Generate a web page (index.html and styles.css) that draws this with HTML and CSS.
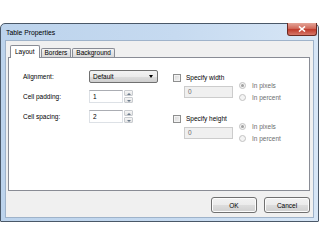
FILE: index.html
```html
<!DOCTYPE html>
<html lang="en">
<head>
    <meta charset="UTF-8">
    <title>Table Properties</title>
    <link rel="stylesheet" href="styles.css">
</head>
<body>
    <div class="window">
        <div class="titlebar">
            <span class="title">Table Properties</span>
            <span class="close">
                <svg width="8" height="6" viewBox="0 0 8 6"><path d="M1 0.5 L7 5.5 M7 0.5 L1 5.5" stroke="#fff" stroke-width="1.6"/></svg>
            </span>
        </div>
        <div class="client">
            <div class="tabs">
                <div class="tab active">Layout</div>
                <div class="tab">Borders</div>
                <div class="tab">Background</div>
            </div>
            <div class="panel">
                <div class="col-left">
                    <div class="field">
                        <span class="label">Alignment:</span>
                        <div class="select"><span>Default</span><span class="caret"></span></div>
                    </div>
                    <div class="field">
                        <span class="label">Cell padding:</span>
                        <div class="textbox">1</div>
                        <div class="spin"><span class="up"></span><span class="down"></span></div>
                    </div>
                    <div class="field">
                        <span class="label">Cell spacing:</span>
                        <div class="textbox">2</div>
                        <div class="spin"><span class="up"></span><span class="down"></span></div>
                    </div>
                </div>
                <div class="col-right">
                    <div class="size-group">
                        <div class="check-row"><span class="checkbox"></span><span>Specify width</span></div>
                        <div class="size-row">
                            <div class="textbox disabled">0</div>
                            <div class="radios">
                                <div class="radio-row"><span class="radio checked"></span><span>In pixels</span></div>
                                <div class="radio-row"><span class="radio"></span><span>In percent</span></div>
                            </div>
                        </div>
                    </div>
                    <div class="size-group">
                        <div class="check-row"><span class="checkbox"></span><span>Specify height</span></div>
                        <div class="size-row">
                            <div class="textbox disabled">0</div>
                            <div class="radios">
                                <div class="radio-row"><span class="radio checked"></span><span>In pixels</span></div>
                                <div class="radio-row"><span class="radio"></span><span>In percent</span></div>
                            </div>
                        </div>
                    </div>
                </div>
            </div>
            <div class="footer">
                <button class="btn">OK</button>
                <button class="btn">Cancel</button>
            </div>
        </div>
    </div>
</body>
</html>
```

FILE: styles.css
```css
/* Page */
body {
    margin: 0;
    background: #fff;
    font-family: 'Liberation Sans', Arial, sans-serif;
    font-size: 6.5px;
    color: #000;
}

/* Window frame */
.window {
    margin-top: 23px;
    width: 319px;
    height: 199px;
    box-sizing: border-box;
    border: 1px solid #4a5868;
    border-radius: 5px 5px 1px 1px;
    padding: 0 4px 3px 4px;
    background: linear-gradient(90deg, #bcd3ec, #c6daf0 55%, #d7e6f6);
    display: flex;
    flex-direction: column;
}

.titlebar {
    height: 16px;
    display: flex;
    justify-content: space-between;
    align-items: flex-start;
}

.title {
    font-size: 6.8px;
    line-height: 16px;
    padding: 1px 0 0 1px;
}

.close {
    margin-top: -1px;
    margin-right: -3px;
    width: 30px;
    height: 13px;
    box-sizing: border-box;
    border: 1px solid #6b2a22;
    border-top: none;
    border-radius: 0 0 3px 3px;
    background: linear-gradient(180deg, #e4a598, #d16a5b 45%, #bf3b2c 55%, #d6786a);
    display: flex;
    align-items: center;
    justify-content: center;
}

/* Client area */
.client {
    flex: 1;
    border: 1px solid #9fb3ca;
    background: #f0f0f0;
    padding: 5px 3px 4px 2px;
    display: flex;
    flex-direction: column;
}

/* Tabs */
.tabs {
    display: flex;
    align-items: flex-end;
    height: 11px;
    padding-left: 2px;
    gap: 1px;
}

.tab {
    height: 8px;
    line-height: 8px;
    padding: 0 3px;
    border: 1px solid #898c95;
    border-bottom: none;
    border-radius: 2px 2px 0 0;
    background: linear-gradient(180deg, #f4f4f4, #e4e4e4 50%, #d9d9d9);
}

.tab.active {
    height: 12px;
    line-height: 11px;
    padding: 0 4px;
    margin-bottom: -1px;
    background: #fff;
    position: relative;
    z-index: 1;
}

.panel {
    height: 134px;
    box-sizing: border-box;
    border: 1px solid #898c95;
    background: #fff;
    padding: 12px 0 0 14px;
    display: flex;
}

/* Left column */
.col-left {
    width: 150px;
    display: flex;
    flex-direction: column;
    gap: 7px;
}

.field {
    display: flex;
    align-items: center;
    height: 13px;
}

.label {
    width: 66px;
}

.select {
    width: 69px;
    height: 13px;
    box-sizing: border-box;
    border: 1px solid #707070;
    border-radius: 2px;
    background: linear-gradient(180deg, #f3f3f3, #ebebeb 50%, #dddddd 51%, #cfcfcf);
    display: flex;
    align-items: center;
    justify-content: space-between;
    padding: 0 4px 0 3px;
}

.caret {
    width: 0;
    height: 0;
    border-left: 2.5px solid transparent;
    border-right: 2.5px solid transparent;
    border-top: 3px solid #000;
}

.textbox {
    width: 34px;
    height: 13px;
    box-sizing: border-box;
    border: 1px solid #dde1e6;
    border-top-color: #abadb3;
    background: #fff;
    padding-left: 3px;
    line-height: 11px;
}

.spin {
    margin-left: 1px;
    width: 9px;
    height: 13px;
    display: flex;
    flex-direction: column;
    gap: 1px;
}

.spin span {
    flex: 1;
    box-sizing: border-box;
    border: 1px solid #c9ccd0;
    border-radius: 1px;
    background: linear-gradient(180deg, #f6f6f6, #e4e4e4);
    position: relative;
}

.spin span::after {
    content: '';
    position: absolute;
    left: 1.5px;
    top: 1.5px;
    border-left: 2px solid transparent;
    border-right: 2px solid transparent;
}

.spin .up::after {
    border-bottom: 2px solid #6b7b8c;
}

.spin .down::after {
    border-top: 2px solid #6b7b8c;
}

/* Right column */
.col-right {
    padding-top: 3px;
    display: flex;
    flex-direction: column;
    gap: 11px;
}

.check-row {
    display: flex;
    align-items: center;
    height: 9px;
    gap: 5px;
}

.checkbox {
    width: 8px;
    height: 8px;
    box-sizing: border-box;
    border: 1px solid #8e8f8f;
    background: linear-gradient(135deg, #d6d6d6, #f4f4f4);
    box-shadow: inset 0 0 0 1px #f2f2f2;
}

.size-row {
    display: flex;
    align-items: flex-start;
    margin-top: 4px;
    margin-left: 11px;
}

.textbox.disabled {
    width: 49px;
    height: 12px;
    background: #f0f0f0;
    border-color: #cccccc;
    color: #6d6d6d;
    line-height: 10px;
}

.radios {
    margin-left: 6px;
    margin-top: -7px;
    display: flex;
    flex-direction: column;
}

.radio-row {
    display: flex;
    align-items: center;
    height: 12px;
    gap: 6px;
    color: #6d6d6d;
}

.radio {
    width: 7px;
    height: 7px;
    box-sizing: border-box;
    border: 1px solid #c2c2c2;
    border-radius: 50%;
    background: #f4f4f4;
    display: flex;
    align-items: center;
    justify-content: center;
}

.radio.checked::after {
    content: '';
    width: 3px;
    height: 3px;
    border-radius: 50%;
    background: #a0a0a0;
}

/* Footer buttons */
.footer {
    margin-top: 6px;
    display: flex;
    justify-content: flex-end;
    gap: 7px;
}

.btn {
    width: 46px;
    height: 16px;
    margin: 0;
    padding: 0;
    font-family: inherit;
    font-size: 6.5px;
    color: #000;
    border: 1px solid #707070;
    border-radius: 3px;
    background: linear-gradient(180deg, #f2f2f2, #ebebeb 50%, #dddddd 51%, #cfcfcf);
    box-shadow: inset 0 0 0 1px #fcfcfc;
}
```
